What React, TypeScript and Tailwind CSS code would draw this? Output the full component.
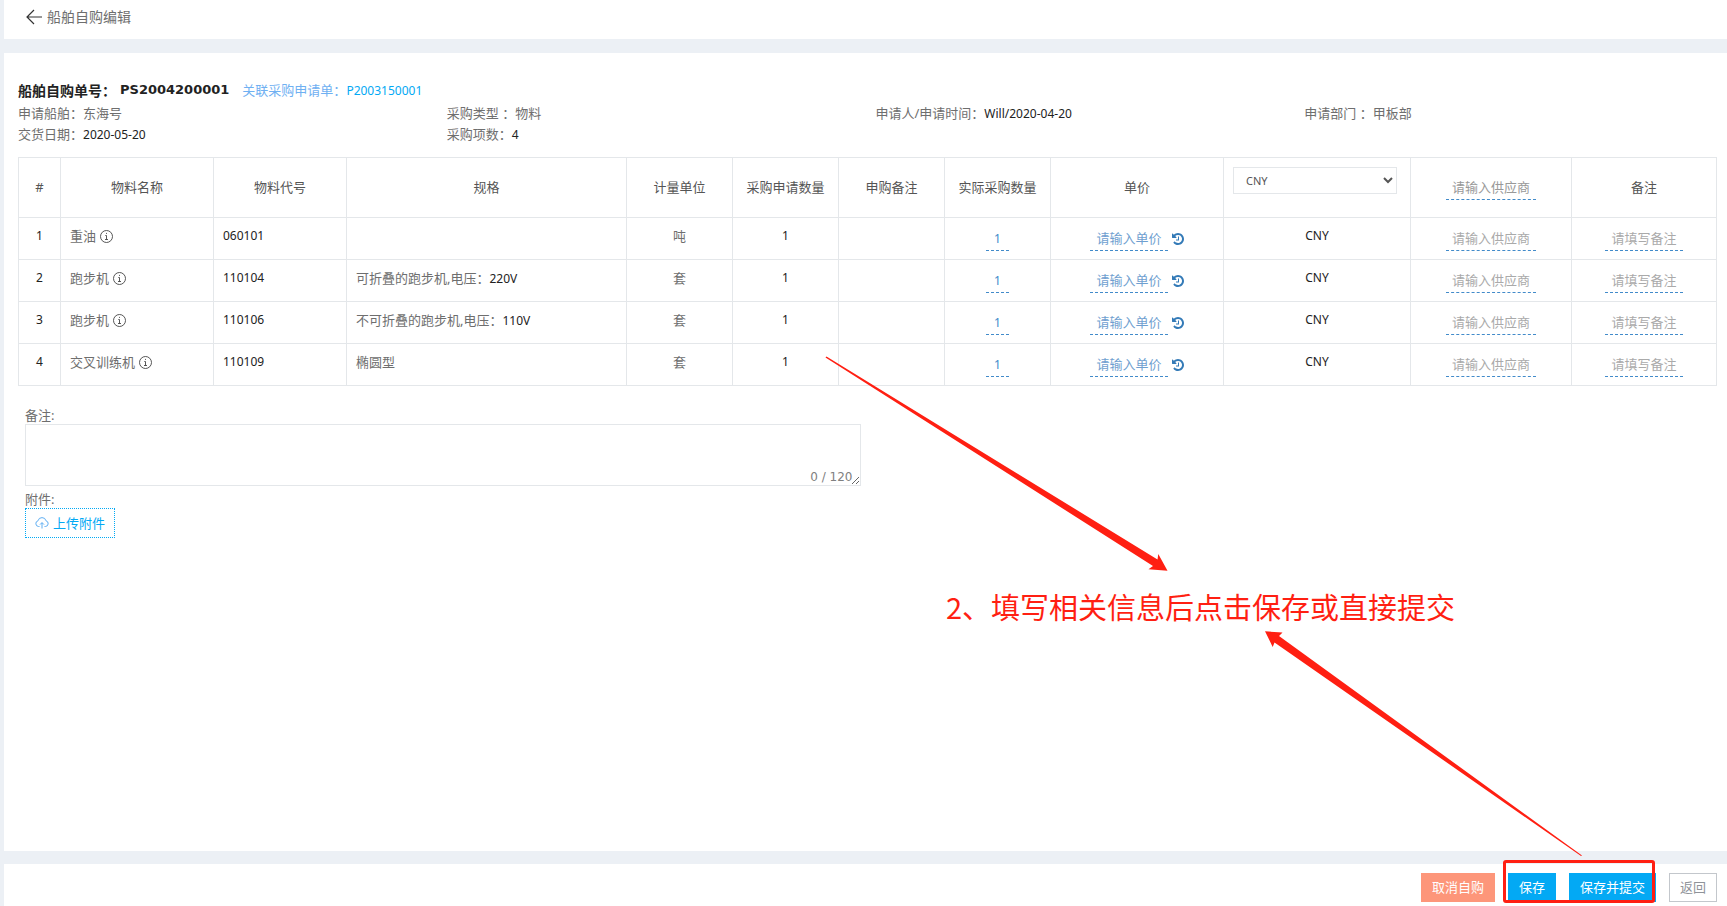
import { useState } from 'react';

interface Material {
  name: string;
  code: string;
  spec: string;
  voltage?: string;
  unit: string;
  quantity: number;
}

const materials: Material[] = [
  { name: '重油', code: '060101', spec: '', unit: '吨', quantity: 1 },
  { name: '跑步机', code: '110104', spec: '可折叠的跑步机,电压：', voltage: '220V', unit: '套', quantity: 1 },
  { name: '跑步机', code: '110106', spec: '不可折叠的跑步机,电压：', voltage: '110V', unit: '套', quantity: 1 },
  { name: '交叉训练机', code: '110109', spec: '椭圆型', unit: '套', quantity: 1 },
];

const cell = 'border border-[#e4e7ea] px-[9px] pt-[9px] align-top';
const headCell = 'border border-[#e4e7ea] px-[9px] font-normal align-middle';
const editable = 'h-6 border-b border-dashed border-[#428bca] leading-[23px]';
const value = 'text-xs leading-[18px] text-[#222]';

function BackIcon() {
  return (
    <svg className="h-4 w-4" viewBox="0 0 16 16" fill="none" stroke="#333" strokeWidth="1.2">
      <path d="M8 1 1 8l7 7M1 8h15" />
    </svg>
  );
}

function InfoIcon() {
  return (
    <svg className="h-[13px] w-[13px]" viewBox="0 0 13 13" fill="none" stroke="#444">
      <circle cx="6.5" cy="6.5" r="6" strokeWidth="0.9" />
      <path d="M5.3 5.5h1.2v4M5 9.5h3M6 3.4h1" strokeWidth="0.9" />
    </svg>
  );
}

function HistoryIcon() {
  return (
    <svg className="h-3 w-3" viewBox="0 128 1536 1536" fill="currentColor">
      <path d="M1536 896q0 156-61 298t-164 245-245 164-298 61q-172 0-327-72.5t-264-204.5q-7-10-6.5-22.5t8.5-20.5l137-138q10-9 25-9 16 2 23 12 73 95 179 147t225 52q104 0 198.5-40.5t163.5-109.5 109.5-163.5 40.5-198.5-40.5-198.5-109.5-163.5-163.5-109.5-198.5-40.5q-98 0-188 35.5t-160 101.5l137 138q31 30 14 69-17 40-59 40h-448q-26 0-45-19t-19-45v-448q0-42 40-59 39-17 69 14l130 129q107-101 244.5-156.5t284.5-55.5q156 0 298 61t245 164 164 245 61 298zm-640-288v448q0 14-9 23t-23 9h-320q-14 0-23-9t-9-23v-64q0-14 9-23t23-9h224v-352q0-14 9-23t23-9h64q14 0 23 9t9 23z" />
    </svg>
  );
}

function UploadIcon() {
  return (
    <svg className="h-[14px] w-[14px]" viewBox="0 0 14 14" fill="none" stroke="#4fa6f0" strokeWidth="0.9">
      <path d="M4.5 10.5H3.6a2.9 2.9 0 0 1-.6-5.7 4.1 4.1 0 0 1 8 0 2.9 2.9 0 0 1-.6 5.7h-.9M7 12.5V6.8M5 8.6l2-2 2 2" />
    </svg>
  );
}

function Field({ label, children }: { label: string; children: React.ReactNode }) {
  return (
    <div className="flex whitespace-pre">
      <dt>{label}</dt>
      <dd>{children}</dd>
    </div>
  );
}

export default function App() {
  const [currency, setCurrency] = useState('CNY');
  const [remark, setRemark] = useState('');

  return (
    <div className="relative flex min-h-screen flex-col overflow-hidden bg-[#ecf0f5] pl-1 font-['Noto_Sans','Noto_Sans_CJK_SC',sans-serif] text-[13px] leading-[21px] text-[#6e6e6e]">
      <header className="flex h-[39px] items-start bg-white pl-[22px] pt-[7px]">
        <a href="#back" className="flex items-center gap-[5px] text-sm">
          <BackIcon />
          <h1>船舶自购编辑</h1>
        </a>
      </header>

      <main className="mt-[14px] flex-1 bg-white pl-[14px] pr-[10px] pt-[27px]">
        <div className="flex items-center gap-[13px]">
          <h2 className="flex items-center gap-1 text-sm font-bold text-[#222]">
            船舶自购单号：
            <span className="font-['DejaVu_Sans',sans-serif] text-[13px]">PS2004200001</span>
          </h2>
          <a href="#request" className="text-[#6fb0f2]">
            关联采购申请单：<span className="text-xs text-[#03a9f4]">P2003150001</span>
          </a>
        </div>

        <dl className="mt-[2px] grid grid-cols-4 gap-x-4">
          <Field label="申请船舶：">东海号</Field>
          <Field label="采购类型 ：">物料</Field>
          <Field label="申请人/申请时间："><span className="text-xs text-[#222]">Will/2020-04-20</span></Field>
          <Field label="申请部门 ：">甲板部</Field>
          <Field label="交货日期："><span className="text-xs text-[#222]">2020-05-20</span></Field>
          <Field label="采购项数："><span className="text-xs text-[#222]">{materials.length}</span></Field>
        </dl>

        <table className="mt-3 w-full table-fixed border-collapse">
          <colgroup>
            <col className="w-[42px]" />
            <col className="w-[153px]" />
            <col className="w-[133px]" />
            <col className="w-[280px]" />
            <col className="w-[106px]" />
            <col className="w-[106px]" />
            <col className="w-[106px]" />
            <col className="w-[106px]" />
            <col className="w-[173px]" />
            <col className="w-[187px]" />
            <col className="w-[161px]" />
            <col className="w-[145px]" />
          </colgroup>
          <thead>
            <tr className="h-[60px] text-[#555]">
              <th className={headCell}>#</th>
              <th className={headCell}>物料名称</th>
              <th className={headCell}>物料代号</th>
              <th className={headCell}>规格</th>
              <th className={headCell}>计量单位</th>
              <th className={headCell}>采购申请数量</th>
              <th className={headCell}>申购备注</th>
              <th className={headCell}>实际采购数量</th>
              <th className={headCell}>单价</th>
              <th className="border border-[#e4e7ea] pl-[9px] pr-[13px] pt-[9px] align-top font-normal">
                <select
                  aria-label="币种"
                  value={currency}
                  onChange={(e) => setCurrency(e.target.value)}
                  className="block h-[27px] w-full border border-[#e4e7ea] bg-white px-2 text-[11px]"
                >
                  <option>CNY</option>
                  <option>USD</option>
                </select>
              </th>
              <th className={headCell}>
                <button className={`${editable} px-[6px] text-[#999]`}>请输入供应商</button>
              </th>
              <th className={headCell}>备注</th>
            </tr>
          </thead>
          <tbody>
            {materials.map((item, index) => (
              <tr key={item.code} className="h-[42px] text-center leading-[18px]">
                <td className={`${cell} ${value}`}>{index + 1}</td>
                <td className={cell}>
                  <div className="flex items-center gap-1">
                    {item.name}
                    <InfoIcon />
                  </div>
                </td>
                <td className={`${cell} ${value} text-left`}>{item.code}</td>
                <td className={`${cell} text-left`}>
                  {item.spec}
                  <span className={value}>{item.voltage}</span>
                </td>
                <td className={cell}>{item.unit}</td>
                <td className={`${cell} ${value}`}>{item.quantity}</td>
                <td className={cell}></td>
                <td className={cell}>
                  <button className={`${editable} px-2 text-xs text-[#428bca]`}>{item.quantity}</button>
                </td>
                <td className={cell}>
                  <div className="flex items-center justify-center gap-1 text-[#337ab7]">
                    <button className={`${editable} px-[6px] text-[#6f9fd0]`}>请输入单价</button>
                    <button aria-label="历史价格">
                      <HistoryIcon />
                    </button>
                  </div>
                </td>
                <td className={`${cell} ${value}`}>{currency}</td>
                <td className={cell}>
                  <button className={`${editable} px-[6px] text-[#aaa]`}>请输入供应商</button>
                </td>
                <td className={cell}>
                  <button className={`${editable} px-[6px] text-[#aaa]`}>请填写备注</button>
                </td>
              </tr>
            ))}
          </tbody>
        </table>

        <div className="mt-5 w-1/2 px-[7px]">
          <label htmlFor="remark" className="block leading-[18px]">备注:</label>
          <div className="relative">
            <textarea
              id="remark"
              maxLength={120}
              value={remark}
              onChange={(e) => setRemark(e.target.value)}
              className="block h-[62px] w-full border border-[#e4e7ea] p-2"
            />
            <span className="pointer-events-none absolute bottom-0 right-2 font-['DejaVu_Sans',sans-serif] text-xs leading-[18px] text-[#808080]">
              {remark.length} / 120
            </span>
          </div>
          <p className="mt-1 leading-[18px]">附件:</p>
          <button className="flex h-[30px] items-center gap-1 border border-dotted border-[#03a9f4] px-[9px] text-[#03a9f4]">
            <UploadIcon />
            上传附件
          </button>
        </div>
      </main>

      <footer className="mt-[13px] flex h-[42px] justify-end gap-[13px] bg-white pr-[10px] pt-[9px]">
        <button className="h-[29px] bg-[#fd967a] px-[11px] text-white">取消自购</button>
        <div className="relative flex gap-[13px]">
          <button className="h-[29px] bg-[#03a9f4] px-[11px] text-white">保存</button>
          <button className="h-[29px] bg-[#03a9f4] px-[11px] text-white">保存并提交</button>
          <div className="pointer-events-none absolute -left-[5px] -top-[13px] bottom-[3px] right-[1px] rounded-[3px] border-3 border-[#ff1f12]" />
        </div>
        <button className="h-[29px] border border-[#c3c7cc] px-[10px] text-[#8f9399]">返回</button>
      </footer>

      {/* Guide notes drawn over the form */}
      <svg className="pointer-events-none absolute left-0 top-0 h-[906px] w-[1727px]" viewBox="0 0 1727 906" fill="#ff1f12">
        <path d="M826.5 356.5 1157.5 559.5 1158.3 554 1167.5 570.7 1148.5 569.3 1153 566 825.5 357.5z" />
        <path d="M1582 855.5 1279 636 1282.5 632.5 1265 631.3 1272.7 647 1274.5 642.5 1581 856z" />
      </svg>
      <p className="pointer-events-none absolute left-[946px] top-[585px] whitespace-nowrap font-['Noto_Sans_CJK_SC',sans-serif] text-[29px] leading-[42px] text-[#ff1f12]">
        2、填写相关信息后点击保存或直接提交
      </p>
    </div>
  );
}
